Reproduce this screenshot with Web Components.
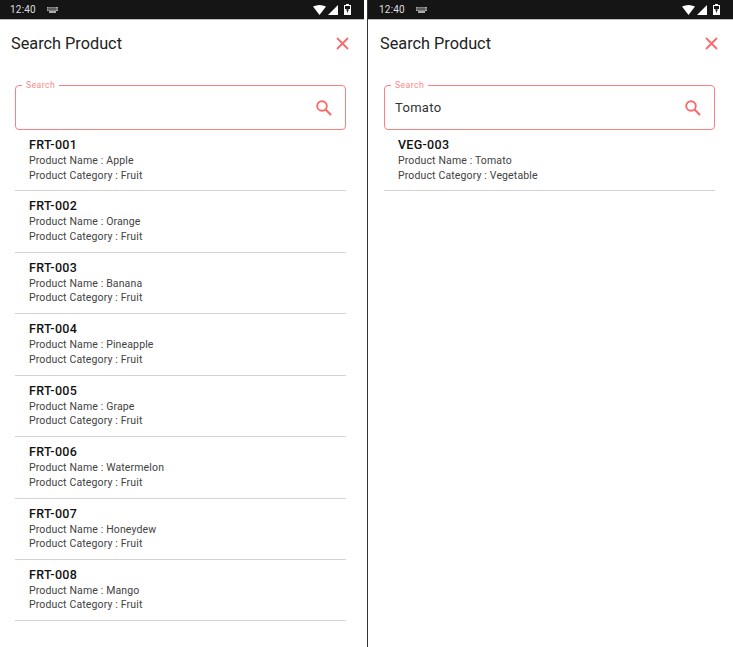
<!DOCTYPE html>
<html>
<head>
<meta charset="utf-8">
<style>
  html, body { margin: 0; height: 100%; background: #fff; }
  body { overflow: hidden; font-family: Roboto, sans-serif; }
  .screens { display: flex; height: 647px; }
</style>
</head>
<body>
<div class="screens">
  <search-screen id="all"></search-screen>
  <search-screen id="filtered" value="Tomato"></search-screen>
</div>

<template id="t-status">
  <style>
    :host { display: flex; align-items: center; height: 19px; padding: 0 13px 0 calc(10px + var(--inset, 0px)); background: #151515; color: #ddd; font-size: 10px; border-bottom: 1px solid #bbb; letter-spacing: .2px; }
    .kb { margin-left: 11px; }
    .right { margin-left: auto; display: flex; align-items: center; }
    svg { display: block; }
    .signal { margin: 0 6px 0 2px; }
  </style>
  <span>12:40</span>
  <svg class="kb" width="11" height="6" viewBox="0 0 11 6"><path fill="#aaa" d="M0 0h11v4H9v2H2V4H0z"/><path stroke="#151515" stroke-width=".6" d="M2 0v4M4 0v4M6 0v4M8 0v4M0 2h11"/></svg>
  <div class="right">
    <svg width="13" height="10" viewBox="0 0 13 10"><path fill="#fff" d="M0 1.500Q6.500-1.500 13 1.500L6.500 10z"/></svg>
    <svg class="signal" width="10" height="10" viewBox="0 0 10 10"><path fill="#fff" d="M10 0v10H0z"/></svg>
    <svg width="7" height="11" viewBox="0 0 7 11"><path fill="#fff" d="M2 0h3v1h2v10H0V1h2z"/><path fill="#151515" d="M1 2h5v3H1z"/><path fill="#151515" d="M4 3 2 6.500h1.200L3 9.500l2-4H3.800z"/></svg>
  </div>
</template>

<template id="t-header">
  <style>
    :host { display: flex; align-items: center; justify-content: space-between; height: 47px; padding: 0 15px 0 11px; color: #212121; font-size: 16.300px; }
    svg { display: block; }
  </style>
  <span>Search Product</span>
  <svg width="13" height="13" viewBox="0 0 13 13"><path d="M1 1l11 11M12 1 1 12" stroke="#fb6a6a" stroke-width="1.800" fill="none"/></svg>
</template>

<template id="t-search">
  <style>
    :host { display: flex; align-items: center; position: relative; height: 43px; margin: 18px 18px 0 15px; padding: 0 13px 0 10px; border: 1px solid #fb8080; border-radius: 4px; color: #333; font-size: 13px; letter-spacing: .3px; }
    label { position: absolute; left: 6px; top: -6px; padding: 0 4px; background: #fff; color: #fb8a8a; font-size: 8.700px; line-height: 11px; letter-spacing: .4px; }
    span { flex: 1; }
    svg { display: block; }
  </style>
  <label>Search</label>
  <span></span>
  <svg width="16" height="16" viewBox="0 0 16 16"><circle cx="6" cy="6" r="4.800" stroke="#fb6a6a" stroke-width="1.900" fill="none"/><path d="M9.500 9.500 15 15" stroke="#fb6a6a" stroke-width="2.100"/></svg>
</template>

<template id="t-item">
  <style>
    :host { display: block; height: 53.430px; margin: 0 18px 0 15px; padding: 7px 0 0 14px; border-bottom: 1px solid #d4d4d4; color: #424242; font-size: 10.500px; letter-spacing: .14px; line-height: 14.500px; }
    b { display: block; font-size: 12.500px; font-weight: 500; letter-spacing: .3px; line-height: 16px; color: #111; margin-bottom: 1px; }
  </style>
  <b></b>
  <div class="name"></div>
  <div class="cat"></div>
</template>

<template id="t-screen">
  <style>
    :host { display: block; width: 364px; flex: none; background: #fff; }
    :host(#filtered) { --inset: 1px; width: 364px; margin-left: 3px; padding-left: 1px; border-left: 1px solid #333; }
    status-bar { margin-left: calc(0px - var(--inset, 0px)); }
  </style>
  <status-bar></status-bar>
  <search-header></search-header>
  <search-field></search-field>
  <div class="list"></div>
</template>

<script>
const clone = id => document.getElementById(id).content.cloneNode(true);

class StatusBar extends HTMLElement {
  constructor() {
    super();
    this.attachShadow({mode: 'open'}).appendChild(clone('t-status'));
  }
}
class SearchHeader extends HTMLElement {
  constructor() {
    super();
    this.attachShadow({mode: 'open'}).appendChild(clone('t-header'));
  }
}
class SearchField extends HTMLElement {
  constructor() {
    super();
    this.attachShadow({mode: 'open'}).appendChild(clone('t-search'));
  }
  set value(v) { this.shadowRoot.querySelector('span').textContent = v; }
}
class ProductItem extends HTMLElement {
  constructor() {
    super();
    this.attachShadow({mode: 'open'}).appendChild(clone('t-item'));
  }
  set data(d) {
    const s = this.shadowRoot;
    s.querySelector('b').textContent = d[0];
    s.querySelector('.name').textContent = 'Product Name : ' + d[1];
    s.querySelector('.cat').textContent = 'Product Category : ' + d[2];
  }
}
const products = [
  ['FRT-001', 'Apple', 'Fruit'], ['FRT-002', 'Orange', 'Fruit'],
  ['FRT-003', 'Banana', 'Fruit'], ['FRT-004', 'Pineapple', 'Fruit'],
  ['FRT-005', 'Grape', 'Fruit'], ['FRT-006', 'Watermelon', 'Fruit'],
  ['FRT-007', 'Honeydew', 'Fruit'], ['FRT-008', 'Mango', 'Fruit']
];
class SearchScreen extends HTMLElement {
  constructor() {
    super();
    this.attachShadow({mode: 'open'}).appendChild(clone('t-screen'));
  }
  connectedCallback() {
    const v = this.getAttribute('value');
    const list = this.shadowRoot.querySelector('.list');
    const rows = v ? [['VEG-003', 'Tomato', 'Vegetable']] : products;
    if (v) this.shadowRoot.querySelector('search-field').value = v;
    rows.forEach(r => {
      const el = document.createElement('product-item');
      el.data = r;
      list.appendChild(el);
    });
  }
}
customElements.define('status-bar', StatusBar);
customElements.define('search-header', SearchHeader);
customElements.define('search-field', SearchField);
customElements.define('product-item', ProductItem);
customElements.define('search-screen', SearchScreen);
</script>
</body>
</html>
